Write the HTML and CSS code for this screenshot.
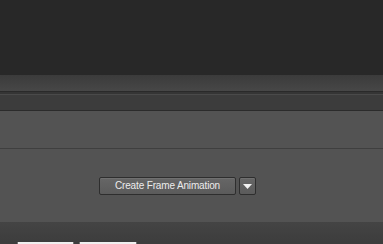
FILE: index.html
```html
<!DOCTYPE html>
<html lang="en">
<head>
  <meta charset="UTF-8" />
  <title>Timeline</title>
  <link rel="stylesheet" href="styles.css">
</head>
<body>
  <div class="canvas-area"></div>
  <div class="panel-header"></div>
  <div class="panel-tabs"></div>
  <div class="panel-toolbar"></div>
  <div class="timeline-body">
    <div class="timeline-actions">
      <button class="btn-create">Create Frame Animation</button>
      <button class="btn-drop">
        <svg width="9" height="5" viewBox="0 0 9 5"><path d="M0 0 H9 L4.5 5 Z" fill="#f2f2f2"/></svg>
      </button>
    </div>
  </div>
  <div class="status-bar"></div>
  <div class="doc-tabs">
    <div class="doc-tab"></div>
    <div class="doc-tab second"></div>
  </div>
</body>
</html>
```

FILE: styles.css
```css
body {
  margin: 0;
  width: 383px;
  height: 244px;
  overflow: hidden;
  background: #282828;
  font-family: Tahoma, "DejaVu Sans", "Liberation Sans", sans-serif;
}

.canvas-area {
  height: 75px;
  background: #282828;
}

.panel-header {
  height: 16px;
  background: linear-gradient(#3b3b3b, #474747);
}

.panel-tabs {
  height: 2px;
  border-top: 1px solid #2a2a2a;
  border-bottom: 1px solid #4a4a4a;
  background: #353535;
}

.panel-toolbar {
  height: 15px;
  background: #3c3c3c;
  border-bottom: 1px solid #2b2b2b;
}

.timeline-body {
  height: 111px;
  background: #535353;
  box-sizing: border-box;
  padding-top: 37px;
}

.timeline-actions {
  border-top: 1px solid #3f3f3f;
  display: flex;
  gap: 3px;
  padding: 28px 0 0 99px;
}

.btn-create {
  width: 137px;
  height: 18px;
  padding: 0;
  border: 1px solid #2e2e2e;
  border-radius: 2px;
  background: linear-gradient(#666666, #5b5b5b);
  box-shadow: inset 0 1px 0 #707070;
  color: #ececec;
  font-family: "Liberation Sans", Arial, sans-serif;
  font-size: 10px;
  letter-spacing: -0.15px;
  line-height: 16px;
}

.btn-drop {
  width: 17px;
  height: 18px;
  padding: 0;
  border: 1px solid #2e2e2e;
  border-radius: 2px;
  background: linear-gradient(#666666, #5b5b5b);
  box-shadow: inset 0 1px 0 #707070;
  display: flex;
  align-items: center;
  justify-content: center;
}

.status-bar {
  height: 20px;
  background: linear-gradient(#444444, #3d3d3d);
}

.doc-tabs {
  display: flex;
  gap: 5px;
  padding-left: 17px;
  height: 2px;
  background: #3d3d3d;
}

.doc-tab {
  width: 57px;
  height: 2px;
  background: #f0f0f0;
  border-left: 1px solid #707070;
  border-right: 1px solid #707070;
  box-sizing: border-box;
}

.doc-tab.second {
  width: 58px;
}
```
